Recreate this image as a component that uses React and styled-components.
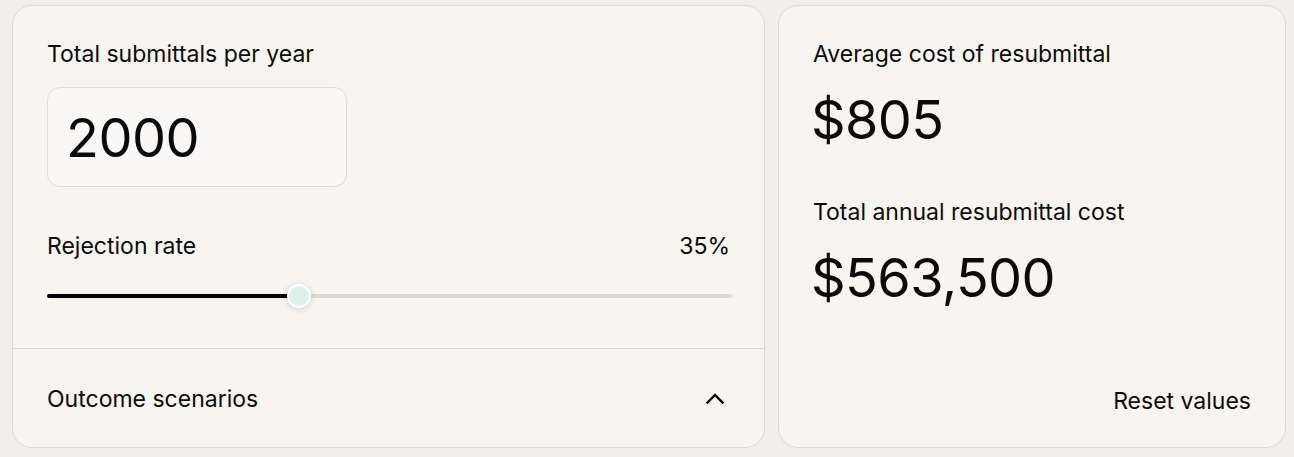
import styled, { createGlobalStyle } from "styled-components";

const GlobalStyle = createGlobalStyle`
  body {
    margin: 0;
    background: #f1efeb;
    font-family: Inter, "Noto Sans", sans-serif;
    color: #0b0b0b;
  }
`;

export default function App() {
  const rate = 35;
  return (
    <>
      <GlobalStyle />
      <Page>
        <LeftCard>
          <TopSection>
            <Label>Total submittals per year</Label>
            <NumberBox>2000</NumberBox>
            <RateRow>
              <Label>Rejection rate</Label>
              <Label>{rate}%</Label>
            </RateRow>
            <Slider>
              <Track />
              <Fill style={{ width: `${(rate / 95) * 100}%` }} />
              <Thumb style={{ left: `${(rate / 95) * 100}%` }} />
            </Slider>
          </TopSection>
          <Accordion>
            <Label>Outcome scenarios</Label>
            <svg width="24" height="24" viewBox="0 0 24 24" fill="none" stroke="#0b0b0b" strokeWidth="2.4" strokeLinecap="square">
              <path d="M4.5 15.5 12 8 19.5 15.5" />
            </svg>
          </Accordion>
        </LeftCard>
        <RightCard>
          <Label>Average cost of resubmittal</Label>
          <BigValue>$805</BigValue>
          <Label $top={48}>Total annual resubmittal cost</Label>
          <BigValue>$563,500</BigValue>
          <ResetButton>Reset values</ResetButton>
        </RightCard>
      </Page>
    </>
  );
}

const Page = styled.div`
  display: flex;
  align-items: flex-start;
  gap: 13px;
  padding: 5px 8px 0 12px;
`;

const Card = styled.div`
  background: #f8f5f1;
  border: 1px solid #dcd8d3;
  border-radius: 20px;
  box-sizing: border-box;
  height: 443px;
`;

const LeftCard = styled(Card)`
  width: 753px;
  display: flex;
  flex-direction: column;
`;

const RightCard = styled(Card)`
  flex: 1;
  display: flex;
  flex-direction: column;
  align-items: flex-start;
  padding: 34px 34px 0 34px;
`;

const TopSection = styled.div`
  padding: 34px 34px 0 34px;
  height: 343px;
  flex-shrink: 0;
  box-sizing: border-box;
  border-bottom: 1px solid #dcd8d3;
`;

const Label = styled.div`
  font-size: 23px;
  line-height: 28px;
  font-weight: 400;
  margin-top: ${(p) => p.$top || 0}px;
`;

const NumberBox = styled.div`
  margin-top: 19px;
  width: 300px;
  height: 100px;
  box-sizing: border-box;
  border: 1px solid #e0dcd7;
  border-radius: 13px;
  background: #faf8f6;
  padding-left: 18px;
  display: flex;
  align-items: center;
  font-size: 54px;
  letter-spacing: -0.5px;
`;

const RateRow = styled.div`
  display: flex;
  justify-content: space-between;
  margin-top: 45px;
`;

const Slider = styled.div`
  position: relative;
  margin-top: 24px;
  height: 24px;
`;

const Track = styled.div`
  position: absolute;
  left: 0;
  right: -2px;
  top: 10px;
  height: 4px;
  border-radius: 2px;
  background: #dcdad7;
`;

const Fill = styled.div`
  position: absolute;
  left: 0;
  top: 10px;
  height: 4px;
  border-radius: 2px;
  background: #000;
`;

const Thumb = styled.div`
  position: absolute;
  top: 0;
  width: 24px;
  height: 24px;
  margin-left: -12px;
  border-radius: 50%;
  background: #def0ea;
  border: 2px solid #ffffff;
  box-sizing: border-box;
  box-shadow: 0 1px 6px rgba(0, 0, 0, 0.18);
`;

const Accordion = styled.div`
  flex: 1;
  display: flex;
  align-items: center;
  justify-content: space-between;
  padding: 2px 37px 0 34px;
`;

const BigValue = styled.div`
  margin-top: 22px;
  margin-left: -2px;
  font-size: 54px;
  line-height: 60px;
  letter-spacing: -0.6px;
`;

const ResetButton = styled.button`
  margin-top: auto;
  margin-bottom: 32px;
  align-self: flex-end;
  background: none;
  border: none;
  padding: 0;
  font-family: Inter, "Noto Sans", sans-serif;
  font-size: 23px;
  line-height: 28px;
  color: #0b0b0b;
  cursor: pointer;
`;
